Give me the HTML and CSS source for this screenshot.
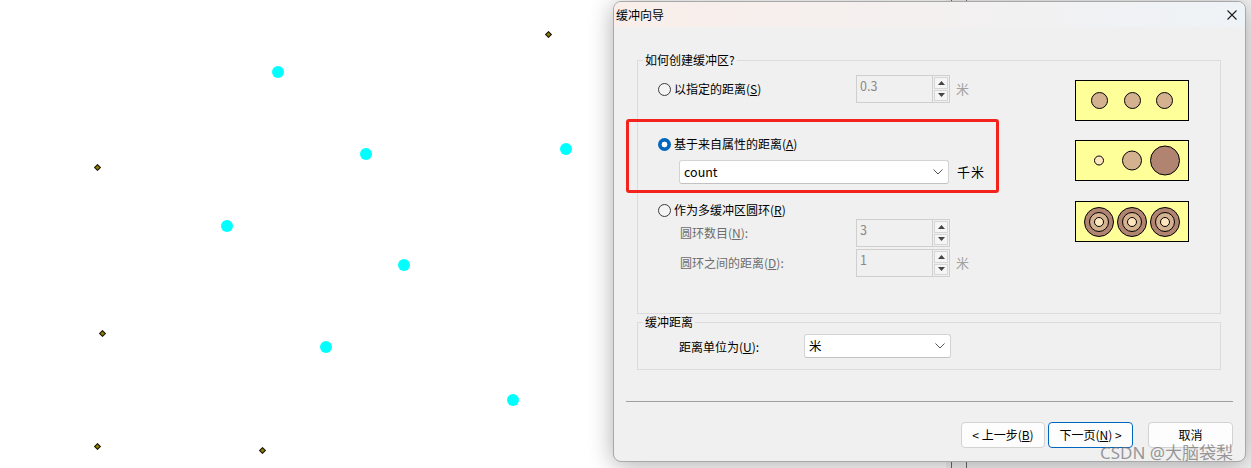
FILE: index.html
```html
<!DOCTYPE html>
<html lang="zh-CN">
<head>
<meta charset="utf-8">
<title>缓冲向导</title>
<link rel="stylesheet" href="styles.css">
</head>
<body>
<div class="desk">
  <div class="map">
    <span class="dot" style="--x:278px;--y:72px"></span>
    <span class="dot" style="--x:366px;--y:154px"></span>
    <span class="dot" style="--x:566px;--y:149px"></span>
    <span class="dot" style="--x:227px;--y:226px"></span>
    <span class="dot" style="--x:404px;--y:265px"></span>
    <span class="dot" style="--x:326px;--y:347px"></span>
    <span class="dot" style="--x:513px;--y:400px"></span>
    <span class="dia" style="--x:549px;--y:35px"></span>
    <span class="dia" style="--x:98px;--y:168px"></span>
    <span class="dia" style="--x:103px;--y:334px"></span>
    <span class="dia" style="--x:98px;--y:447px"></span>
    <span class="dia" style="--x:263px;--y:451px"></span>
  </div>
  <div class="bgwin"><div class="bgcol"></div></div>

  <div class="dialog">
    <div class="titlebar">
      <span class="title">缓冲向导</span>
      <svg class="close" width="10" height="10" viewBox="0 0 10 10"><path d="M0.5 0.5L9.5 9.5M9.5 0.5L0.5 9.5" stroke="#1b1b1b" stroke-width="1.1" fill="none"/></svg>
    </div>
    <div class="content">
      <div class="group g1">
        <span class="legend">如何创建缓冲区?</span>
        <div class="opts">
          <div class="row row-a">
            <label class="rlabel"><span class="radio"></span><span class="rtext">以指定的距离(<u>S</u>)</span></label>
            <div class="spin"><span class="spin-in">0.3</span><span class="spin-btns"><span class="sb"><svg width="7" height="4" viewBox="0 0 7 4"><path d="M0 4L3.5 0L7 4Z" fill="#444"/></svg></span><span class="sb"><svg width="7" height="4" viewBox="0 0 7 4"><path d="M0 0L3.5 4L7 0Z" fill="#444"/></svg></span></span></div>
            <span class="unit dim">米</span>
          </div>
          <div class="row row-b">
            <label class="rlabel"><span class="radio on"></span><span class="rtext">基于来自属性的距离(<u>A</u>)</span></label>
          </div>
          <div class="row row-c">
            <div class="combo wide"><span>count</span><svg width="10" height="6" viewBox="0 0 10 6"><path d="M0.5 0.5L5 5L9.5 0.5" stroke="#555" stroke-width="1" fill="none"/></svg></div>
            <span class="unit strong">千米</span>
          </div>
          <div class="row row-d">
            <label class="rlabel"><span class="radio"></span><span class="rtext">作为多缓冲区圆环(<u>R</u>)</span></label>
          </div>
          <div class="row row-e">
            <span class="sublabel">圆环数目(<u>N</u>):</span>
            <div class="spin"><span class="spin-in">3</span><span class="spin-btns"><span class="sb"><svg width="7" height="4" viewBox="0 0 7 4"><path d="M0 4L3.5 0L7 4Z" fill="#444"/></svg></span><span class="sb"><svg width="7" height="4" viewBox="0 0 7 4"><path d="M0 0L3.5 4L7 0Z" fill="#444"/></svg></span></span></div>
          </div>
          <div class="row row-f">
            <span class="sublabel">圆环之间的距离(<u>D</u>):</span>
            <div class="spin"><span class="spin-in">1</span><span class="spin-btns"><span class="sb"><svg width="7" height="4" viewBox="0 0 7 4"><path d="M0 4L3.5 0L7 4Z" fill="#444"/></svg></span><span class="sb"><svg width="7" height="4" viewBox="0 0 7 4"><path d="M0 0L3.5 4L7 0Z" fill="#444"/></svg></span></span></div>
            <span class="unit dim">米</span>
          </div>
        </div>
        <div class="thumbs">
          <svg class="thumb" width="114" height="41" viewBox="0 0 114 41">
            <rect x="0.5" y="0.5" width="113" height="40" fill="#ffff99" stroke="#000"/>
            <circle cx="24.5" cy="20.5" r="8" fill="#d4b28f" stroke="#000"/>
            <circle cx="57.5" cy="20.5" r="8" fill="#d4b28f" stroke="#000"/>
            <circle cx="89.5" cy="20.5" r="8" fill="#d4b28f" stroke="#000"/>
          </svg>
          <svg class="thumb t2" width="114" height="41" viewBox="0 0 114 41">
            <rect x="0.5" y="0.5" width="113" height="40" fill="#ffff99" stroke="#000"/>
            <circle cx="24" cy="20.5" r="4.5" fill="#ffe6bf" stroke="#000"/>
            <circle cx="57" cy="20.5" r="9.5" fill="#d4b28f" stroke="#000"/>
            <circle cx="90" cy="20.5" r="14.5" fill="#b08470" stroke="#000"/>
          </svg>
          <svg class="thumb t3" width="114" height="41" viewBox="0 0 114 41">
            <rect x="0.5" y="0.5" width="113" height="40" fill="#ffff99" stroke="#000"/>
            <g stroke="#000">
              <circle cx="24" cy="21" r="14.5" fill="#b08470"/>
              <circle cx="24" cy="21" r="9.5" fill="#d4b28f"/>
              <circle cx="24" cy="21" r="4.5" fill="#ffe6bf"/>
              <circle cx="57" cy="21" r="14.5" fill="#b08470"/>
              <circle cx="57" cy="21" r="9.5" fill="#d4b28f"/>
              <circle cx="57" cy="21" r="4.5" fill="#ffe6bf"/>
              <circle cx="90" cy="21" r="14.5" fill="#b08470"/>
              <circle cx="90" cy="21" r="9.5" fill="#d4b28f"/>
              <circle cx="90" cy="21" r="4.5" fill="#ffe6bf"/>
            </g>
          </svg>
        </div>
      </div>

      <div class="group g2">
        <span class="legend">缓冲距离</span>
        <span class="unitlabel">距离单位为(<u>U</u>):</span>
        <div class="combo narrow"><span>米</span><svg width="10" height="6" viewBox="0 0 10 6"><path d="M0.5 0.5L5 5L9.5 0.5" stroke="#555" stroke-width="1" fill="none"/></svg></div>
      </div>

      <div class="sep"></div>

      <div class="buttons">
        <button class="btn">&lt;&nbsp;上一步(<u>B</u>)</button>
        <button class="btn primary">下一页(<u>N</u>)&nbsp;&gt;</button>
        <button class="btn cancel">取消</button>
      </div>
    </div>
    <div class="highlight"></div>
  </div>
  <div class="watermark">CSDN @大脑袋梨</div>
</div>
</body>
</html>
```

FILE: styles.css
```css
* { box-sizing: border-box; }

body {
  margin: 0;
  width: 1251px;
  height: 468px;
  overflow: hidden;
  background: #fff;
  font-family: "Noto Sans CJK SC", "Noto Sans", sans-serif;
  font-size: 12px;
  color: #000;
}

.desk {
  position: relative;
  width: 1251px;
  height: 468px;
}

.map {
  position: absolute;
  inset: 0;
}

.dot {
  position: absolute;
  left: var(--x);
  top: var(--y);
  width: 12px;
  height: 12px;
  margin: -6px 0 0 -6px;
  border-radius: 50%;
  background: #00ffff;
}

.dia {
  position: absolute;
  left: var(--x);
  top: var(--y);
  width: 5px;
  height: 5px;
  margin: -3px 0 0 -3px;
  background: #8f7d00;
  border: 1px solid #1a1a1a;
  transform: rotate(45deg);
}

.bgwin {
  position: absolute;
  left: 946px;
  top: 0;
  width: 305px;
  height: 468px;
  background: #f3f3f3;
}

.bgcol {
  width: 16px;
  height: 100%;
  margin-left: 5px;
  border-left: 1px solid #6a6a6a;
  border-right: 1px solid #6a6a6a;
}

.dialog {
  position: absolute;
  left: 613px;
  top: 1px;
  width: 633px;
  height: 461px;
  background: #f0f0f0;
  border: 1px solid #a8a8a8;
  border-radius: 8px;
  box-shadow: 0 3px 24px rgba(0, 0, 0, 0.32);
  overflow: hidden;
  display: flex;
  flex-direction: column;
}

.titlebar {
  height: 25px;
  display: flex;
  align-items: center;
  justify-content: space-between;
  padding: 0 8px 0 2px;
  background: linear-gradient(90deg, #f9eeea 0%, #f4f0ef 45%, #eef3f7 100%);
  flex: none;
}

.title { line-height: 16px; }

.close { display: block; }

.content {
  padding: 33px 24px 0 23px;
  display: flex;
  flex-direction: column;
}

.group {
  position: relative;
  border: 1px solid #dcdcdc;
}

.legend {
  position: absolute;
  top: -9px;
  left: 5px;
  padding: 0 2px;
  line-height: 16px;
  background: #f0f0f0;
}

.g1 {
  height: 254px;
  display: flex;
}

.opts {
  padding: 14px 0 0 20px;
  display: flex;
  flex-direction: column;
}

.row {
  display: flex;
  align-items: center;
}

.rlabel {
  display: flex;
  align-items: center;
  gap: 3px;
  width: 198px;
  line-height: 16px;
  white-space: nowrap;
}

.rtext { display: block; }

.radio {
  width: 13px;
  height: 13px;
  border-radius: 50%;
  border: 1px solid #3c3c3c;
  background: #f4f4f4;
  flex: none;
}

.radio.on {
  border: none;
  background: radial-gradient(circle, #fff 0 2.6px, #0067c0 3.2px);
}

.row-a { height: 28px; }
.row-b { height: 20px; margin-top: 31px; }
.row-c { height: 24px; margin-top: 6px; padding-left: 21px; }
.row-d { height: 18px; margin-top: 17px; }
.row-e { height: 28px; margin-top: 0; }
.row-f { height: 28px; margin-top: 2px; }

.sublabel {
  width: 198px;
  padding-left: 22px;
  color: #6d6d6d;
  line-height: 16px;
  white-space: nowrap;
}

.spin {
  width: 94px;
  height: 28px;
  display: flex;
  border: 1px solid #cfcfcf;
  background: #f0f0f0;
}

.spin-in {
  flex: 1;
  padding: 1px 0 0 3px;
  color: #8a8a8a;
  line-height: 18px;
  font-size: 12.5px;
}

.spin-btns {
  width: 17px;
  display: flex;
  flex-direction: column;
  border-left: 1px solid #cfcfcf;
  padding: 1px;
  gap: 1px;
}

.sb {
  flex: 1;
  display: flex;
  align-items: center;
  justify-content: center;
  background: #f5f5f5;
  border: 1px solid #d6d6d6;
}

.sb svg { display: block; }

.unit {
  margin-left: 6px;
  line-height: 16px;
}

.unit.dim { color: #a2a2a2; font-size: 13px; }

.unit.strong { margin-left: 8px; font-size: 13px; letter-spacing: 1px; }

.combo {
  height: 24px;
  display: flex;
  align-items: center;
  justify-content: space-between;
  padding: 0 5px 0 4px;
  background: #fff;
  border: 1px solid #d3d3d3;
  border-bottom-color: #c2c2c2;
  border-radius: 3px;
}

.combo span { line-height: 16px; font-size: 12.5px; }

.combo.wide { width: 270px; }

.combo.narrow { width: 147px; }

.thumbs {
  margin-left: auto;
  margin-right: 31px;
  padding-top: 19px;
  display: flex;
  flex-direction: column;
}

.thumb { display: block; }
.thumb.t2 { margin-top: 19px; }
.thumb.t3 { margin-top: 20px; }

.g2 {
  margin-top: 8px;
  height: 48px;
  display: flex;
  align-items: center;
  padding-left: 41px;
}

.unitlabel {
  width: 125px;
  line-height: 16px;
  padding-top: 1px;
}

.sep {
  margin: 31px -12px 0 -11px;
  height: 1px;
  background: #a0a0a0;
}

.buttons {
  margin: 20px -12px 0 0;
  display: flex;
  justify-content: flex-end;
}

.btn {
  height: 26px;
  width: 84px;
  padding: 0;
  font-family: inherit;
  font-size: 12px;
  color: #000;
  background: #fdfdfd;
  border: 1px solid #d2d2d2;
  border-radius: 4px;
  line-height: 16px;
}

.btn.primary {
  width: 85px;
  margin-left: 3px;
  border-color: #0067c0;
}

.btn.cancel {
  width: 85px;
  margin-left: 15px;
}

.highlight {
  position: absolute;
  left: 12px;
  top: 117px;
  width: 373px;
  height: 74px;
  border: 3px solid #f5231e;
  border-radius: 3px;
  pointer-events: none;
}

.watermark {
  position: absolute;
  left: 1100px;
  top: 442px;
  font-family: "Noto Sans", "Noto Sans CJK SC", sans-serif;
  font-size: 17px;
  line-height: 22px;
  color: rgba(110, 110, 110, 0.7);
  white-space: nowrap;
  pointer-events: none;
}
```
